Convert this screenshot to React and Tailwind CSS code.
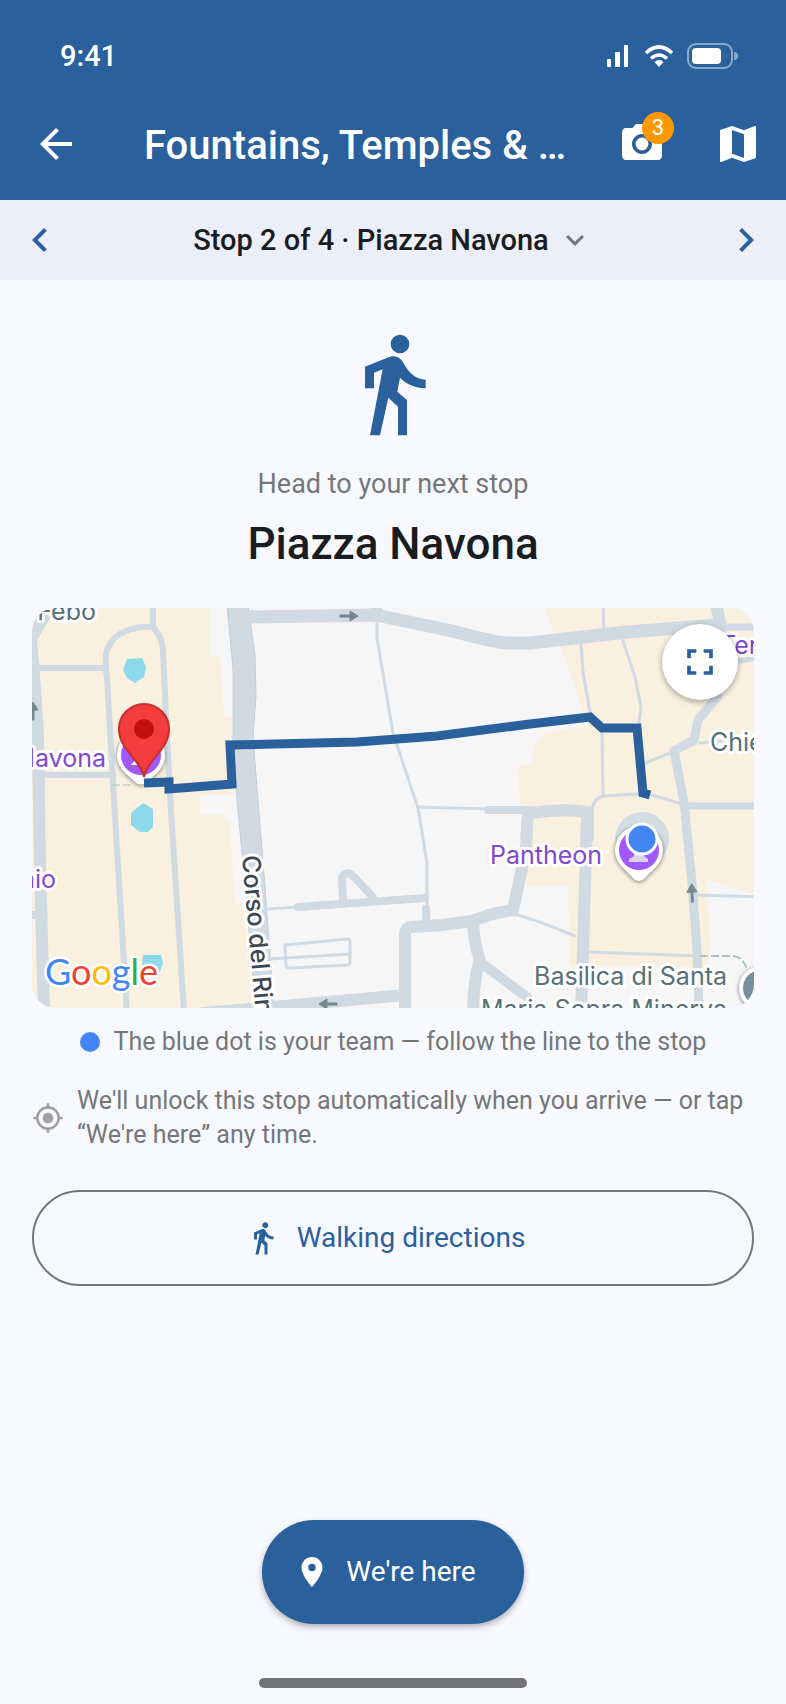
import {
  MdArrowBack,
  MdCameraAlt,
  MdChevronLeft,
  MdChevronRight,
  MdDirectionsWalk,
  MdExpandMore,
  MdFullscreen,
  MdLocationOn,
  MdMap,
  MdMyLocation
} from 'react-icons/md';

const tour = {
  title: 'Fountains, Temples & …',
  photos: 3,
  stop: 2,
  stops: 4,
  stopName: 'Piazza Navona'
};

const GRAY_ROAD = '#cfdae2';
const SLATE = '#566f78';
const PURPLE = '#8148cf';

// width + path for every street, drawn in order
const streets = [
  [12, 'M20 -4 L-1 30 L3 80 L6 127 L8 259 L12 404'],
  [6, 'M4 60 H72'],
  [6, 'M10 167 H81'],
  [8, 'M-4 307 H8'],
  [6, 'M95 404 L82 192 L75 70 Q73 54 74 45 Q78 30 92 24 Q105 18 121 19 Q131 30 131 44 L133 87 L138 187 L152 404'],
  [6, 'M121 -4 V19'],
  [13, 'M216 9 L344 7 L420 23 Q466 35 475 35 L498 35 L595 24 L685 17'],
  [12, 'M344 -4 V7'],
  [7, 'M685 19 H726'],
  [12, 'M684 -4 L689 19'],
  [5, 'M700 54 L726 50'],
  [3, 'M571 -4 L572 24'],
  [3, 'M549 37 L551 64 L558 104'],
  [3, 'M570 122 L571 187'],
  [3, 'M590 30 L603 69 L609 99 L607 115'],
  [3, 'M614 155 L640 144'],
  [3, 'M668 135 L691 133'],
  [9, 'M686 88 L666 112 L662 132 L642 143 L652 194 L660 275 L665 342 L667 404'],
  [7, 'M652 198 H726'],
  [3, 'M560 200 Q563 190 571 188 L605 186 L620 187 L650 196'],
  [3, 'M665 287 L726 289'],
  [3, 'M556 344 L668 348'],
  [3, 'M345 15 L345 30 L361 125 L386 200 L395 255 V310'],
  [3, 'M386 199 L456 201'],
  [8, 'M456 202 H500'],
  [12, 'M556 230 V204 Q530 200 500 205 Q495 208 495 216 L494 242 L481 302 L460 306 L440 313 L410 317 L379 319 Q373 320 373 327 V404'],
  [12, 'M555 210 L551 342 L549 404'],
  [12, 'M441 314 Q442 336 448 352 Q442 368 441 404'],
  [10, 'M448 354 L496 390'],
  [3, 'M482 307 Q490 306 543 328'],
  [3, 'M236 301 L266 299'],
  [8, 'M266 299 L393 290'],
  [8, 'M311 292 L310 269 Q315 262 321 268 L341 289'],
  [8, 'M394 301 V314'],
  [3, 'M253 337 L316 331 Q318 331 318 334 L318 354 Q318 356 316 357 L257 360 Q254 360 254 358 Z'],
  [3, 'M238 351 L318 346'],
  [12, 'M171 405 L241 399 L373 387']
];

const fountains = [
  '95,51 110,50 114,59 112,69 103,75 95,70 91,62',
  '111,195 121,201 121,219 116,224 108,224 99,217 99,205',
  '111,347 129,347 131,355 126,369 116,369 110,359'
];

// one-way arrows: x, y, rotation
const arrows = [
  [317, 8, 0],
  [296, 396, 180],
  [660, 285, -92],
  [1, 103, -90]
];

const labels = [
  { text: 'Febo', x: 64, y: 12, anchor: 'end', color: SLATE },
  { text: 'Navona', x: 74, y: 159, anchor: 'end', color: PURPLE },
  { text: 'nio', x: 24, y: 280, anchor: 'end', color: PURPLE },
  { text: 'Pantheon', x: 458, y: 256, anchor: 'start', color: PURPLE },
  { text: 'Ter', x: 688, y: 46, anchor: 'start', color: PURPLE },
  { text: 'Chie', x: 678, y: 143, anchor: 'start', color: SLATE },
  { text: 'Basilica di Santa', x: 695, y: 377, anchor: 'end', color: SLATE },
  { text: 'Maria Sopra Minerva', x: 695, y: 410, anchor: 'end', color: SLATE }
];

function WalkingFigure() {
  return (
    <svg viewBox="0 0 336 336" className="size-28 text-[#2a609c]" fill="currentColor" aria-hidden="true">
      <circle cx="189" cy="48" r="28" />
      <path d="M84 181V116L149 90C169 80 187 84 199 104C214 133 236 154 266 155V181C234 180 206 168 189 149L181 191L210 216V322H183V236L154 209L129 322H99L137 124L111 134V181Z" />
    </svg>
  );
}

function StatusBar() {
  return (
    <div className="flex h-[88px] items-center justify-between pt-6 pr-12 pl-[60px]">
      <span className="text-[29px] leading-8 font-medium">9:41</span>
      <div className="flex items-center gap-[14px]">
        <svg width="24" height="24" viewBox="0 0 24 24" fill="currentColor" aria-hidden="true">
          <rect x="0" y="15" width="4" height="8" rx="1" />
          <rect x="8" y="8" width="5" height="15" rx="1" />
          <rect x="17" y="1" width="4" height="22" rx="1" />
        </svg>
        <svg width="28" height="24" viewBox="0 0 28 24" fill="none" stroke="currentColor" strokeWidth="3.6" aria-hidden="true">
          <path d="M1 9Q14 -3 27 9" />
          <path d="M6 14.5Q14 7.5 22 14.5" />
          <path d="M9.5 18Q14 14 18.5 18L14 23Z" fill="currentColor" stroke="none" />
        </svg>
        <svg width="51" height="26" viewBox="0 0 51 26" aria-hidden="true">
          <rect x="1" y="1" width="44" height="24" rx="8" fill="none" stroke="#8aa8ca" strokeWidth="2" />
          <rect x="5" y="5" width="29" height="16" rx="4" fill="#fff" />
          <path d="M47 9Q51 9 51 13Q51 17 47 17Z" fill="#8aa8ca" />
        </svg>
      </div>
    </div>
  );
}

function AppBar() {
  return (
    <div className="flex h-28 items-center pr-6 pl-8">
      <button type="button" aria-label="Back">
        <MdArrowBack className="size-12" />
      </button>
      <h1 className="ml-16 flex-1 truncate pt-1 text-[40px] leading-[48px] font-medium">{tour.title}</h1>
      <div className="flex gap-12">
        <button type="button" aria-label="Photos" className="relative">
          <MdCameraAlt className="size-12" />
          <span className="absolute -top-2 -right-2 flex size-8 items-center justify-center rounded-full bg-[#ff9800] text-[22px] leading-8">
            {tour.photos}
          </span>
        </button>
        <button type="button" aria-label="Map">
          <MdMap className="size-12" />
        </button>
      </div>
    </div>
  );
}

function StopSelector() {
  return (
    <nav className="flex h-20 items-center justify-between bg-[#eceef9] px-4">
      <button type="button" aria-label="Previous stop" className="text-[#2a609c]">
        <MdChevronLeft className="size-12" />
      </button>
      <button type="button" className="flex items-center gap-2 text-[29px] leading-10 font-medium">
        Stop {tour.stop} of {tour.stops} · {tour.stopName}
        <MdExpandMore className="size-9 text-[#74777f]" />
      </button>
      <button type="button" aria-label="Next stop" className="text-[#2a609c]">
        <MdChevronRight className="size-12" />
      </button>
    </nav>
  );
}

function RouteMap() {
  return (
    <div className="relative h-[400px] overflow-hidden rounded-3xl">
      <svg viewBox="0 0 722 400" preserveAspectRatio="xMidYMid slice" className="h-full w-full" role="img" aria-label="Walking route">
        <rect width="722" height="400" fill="#f7f6f7" />
        <g fill="#f9f0df">
          <path d="M0 0H178V48H188L192 109H200L201 187H168V207H192L198 216L203 295L212 297L222 400H0Z" />
          <path d="M513 0L521 24L531 44L551 104L556 118L513 125L501 140L500 157H486L488 197L495 279L536 277L538 359H676L678 335L675 272L722 286V0Z" />
        </g>

        <path
          d="M195 -2L201 60V134L205 192L211 255L224 402H242L233 279L226 192L221 130L224 87L223 47L216 -2Z"
          fill={GRAY_ROAD}
          stroke="#c2cfda"
          strokeWidth="1"
        />
        <g fill="none" stroke={GRAY_ROAD} strokeLinejoin="round" strokeLinecap="round">
          {streets.map(([width, d]) => (
            <path key={d} d={d} strokeWidth={width} />
          ))}
        </g>
        <g fill="none" stroke="#a9c4bf" strokeDasharray="8 3">
          <path d="M668 348L701 348Q711 349 715 361" strokeWidth="2" />
          <path d="M80 177H100" strokeWidth="1" />
        </g>
        <circle cx="610" cy="231" r="27" fill="#d2dce3" />

        {fountains.map((points) => (
          <polygon key={points} points={points} fill="#8cd9ec" />
        ))}

        {arrows.map(([x, y, angle]) => (
          <g key={`${x}-${y}`} transform={`translate(${x} ${y}) rotate(${angle})`} fill="#77868f">
            <path d="M-9 -1H1V-5L9 0L1 5V1H-9Z" stroke="#77868f" strokeWidth="1" />
          </g>
        ))}

        <g fontFamily="Inter, sans-serif" fontSize="25" stroke="#fff" strokeWidth="6" strokeLinejoin="round" paintOrder="stroke">
          {labels.map((label) => (
            <text key={label.text} x={label.x} y={label.y} textAnchor={label.anchor} fill={label.color}>
              {label.text}
            </text>
          ))}
          <text transform="translate(210 248) rotate(85)" fontSize="25" fontWeight="500" fill="#3b4854">
            Corso del Rinascimento
          </text>
        </g>

        {/* places */}
        <g className="drop-shadow-[0_1px_2px_rgba(0,0,0,0.5)]">
          <path d="M85 147A24 24 0 0 1 133 147Q133 157 125 165L115 174Q109 179 103 174L93 165Q85 157 85 147Z" fill="#fff" />
        </g>
        <circle cx="109" cy="147" r="20" fill="#a259fb" />
        <path d="M99 157L104 151H109V157Z" fill="#fff" />
        <g className="drop-shadow-[0_1px_2px_rgba(0,0,0,0.5)]">
          <path d="M583 242A24 24 0 0 1 631 242Q631 253 622 261L612 271Q607 275 602 271L592 261Q583 253 583 242Z" fill="#fff" />
        </g>
        <circle cx="607" cy="242" r="20" fill="#a259fb" />
        <path d="M597 254V251L602 248V244H612V248L616 251V254Z" fill="#d9d5ee" />
        <g className="drop-shadow-[0_1px_2px_rgba(0,0,0,0.5)]">
          <circle cx="729" cy="380" r="22" fill="#fff" />
        </g>
        <circle cx="729" cy="380" r="18" fill="#78909c" />

        <path
          d="M112 175L137 174V181L200 176L198 137L325 134L405 128L498 116L558 109L570 120H605L611 185L618 187"
          fill="none"
          stroke="#2a609c"
          strokeWidth="9"
        />

        {/* destination pin */}
        <path
          d="M112 169C109 152 87 142 87 121A25 25 0 0 1 137 121C137 142 115 152 112 169Z"
          fill="#f43c3c"
          stroke="#c62f2f"
          strokeWidth="2"
        />
        <circle cx="112" cy="121" r="10" fill="#c40f0f" />

        {/* team position */}
        <circle cx="610" cy="231" r="15" fill="#4285f4" stroke="#fff" strokeWidth="3" />

        <text
          x="13"
          y="377"
          fontFamily="Lato, sans-serif"
          fontSize="36"
          stroke="#fff"
          strokeWidth="5"
          strokeLinejoin="round"
          paintOrder="stroke"
        >
          <tspan fill="#4285f4">G</tspan>
          <tspan fill="#ea4335">o</tspan>
          <tspan fill="#fbbc04">o</tspan>
          <tspan fill="#4285f4">g</tspan>
          <tspan fill="#34a853">l</tspan>
          <tspan fill="#ea4335">e</tspan>
        </text>
      </svg>
      <button
        type="button"
        aria-label="Full screen"
        className="absolute top-4 right-4 flex size-[76px] items-center justify-center rounded-full bg-white text-[#2a609c] shadow-[0_2px_6px_rgba(0,0,0,0.35)]"
      >
        <MdFullscreen className="size-11" />
      </button>
    </div>
  );
}

function App() {
  return (
    <div className="flex min-h-screen flex-col bg-[#f8f9ff] font-[Roboto,sans-serif] text-[#191c20]">
      <header className="bg-[#2a609c] text-white">
        <StatusBar />
        <AppBar />
      </header>
      <StopSelector />

      <main className="flex flex-1 flex-col px-8 pt-12">
        <div className="flex flex-col items-center text-center">
          <WalkingFigure />
          <p className="mt-6 text-[27px] leading-10 text-[#74777a]">Head to your next stop</p>
          <h2 className="mt-3 mb-9 text-[44px] leading-14 font-medium">{tour.stopName}</h2>
        </div>

        <RouteMap />

        <div className="mt-4 flex items-center justify-center gap-[14px]">
          <span className="size-5 rounded-full bg-[#4285f4]" />
          <p className="text-[25px] leading-9 text-[#74777a]">
            The blue dot is your team — follow the line to the stop
          </p>
        </div>

        <div className="mt-6 flex items-center gap-[13px]">
          <MdMyLocation className="size-8 shrink-0 text-[#a0a1a6]" />
          <p className="text-[25px] leading-[34px] text-[#74777a]">
            We'll unlock this stop automatically when you arrive — or tap “We're here” any time.
          </p>
        </div>

        <button
          type="button"
          className="mt-[38px] flex h-24 w-full items-center justify-center gap-4 rounded-full border-2 border-[#74777f] pr-4 text-[28px] leading-10 text-[#2a609c]"
        >
          <MdDirectionsWalk className="size-9" />
          Walking directions
        </button>
      </main>

      <footer className="flex flex-col items-center pb-4">
        <button
          type="button"
          className="flex h-26 items-center gap-4 rounded-full bg-[#2a609c] pr-12 pl-8 text-[28px] leading-10 text-white shadow-[0_3px_6px_rgba(0,0,0,0.3)]"
        >
          <MdLocationOn className="size-9" />
          We're here
        </button>
        <div className="mt-[54px] h-[10px] w-[268px] rounded-full bg-[#717274]" />
      </footer>
    </div>
  );
}

export default App;
